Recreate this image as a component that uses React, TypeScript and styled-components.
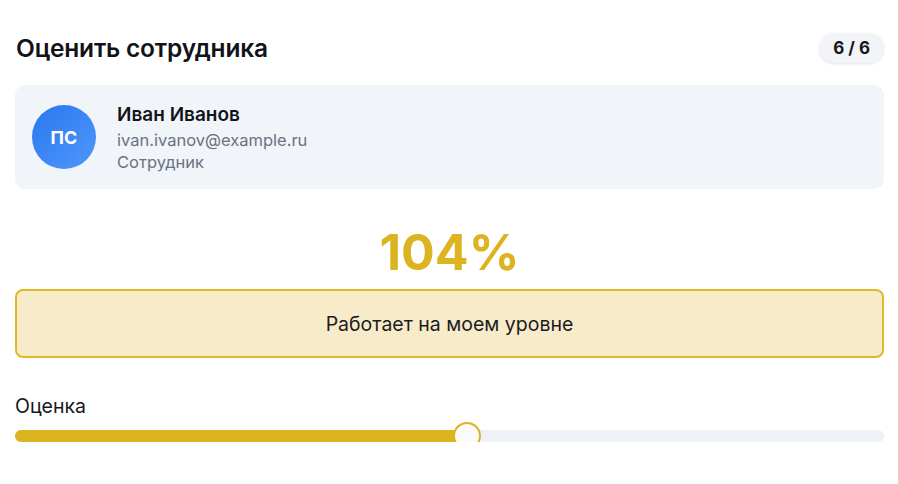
import styled, { createGlobalStyle } from 'styled-components';

const GlobalStyle = createGlobalStyle`
  body {
    margin: 0;
    background: #ffffff;
    font-family: Inter, 'Noto Sans', sans-serif;
    color: #16181d;
  }
`;

const score = 104;
const sliderPercent = 52.1;

const App = () => {
  return (
    <>
      <GlobalStyle />
      <Page>
        <Header>
          <Title>Оценить сотрудника</Title>
          <Counter>6 / 6</Counter>
        </Header>
        <EmployeeCard>
          <Avatar>ПС</Avatar>
          <EmployeeInfo>
            <EmployeeName>Иван Иванов</EmployeeName>
            <EmployeeMeta>ivan.ivanov@example.ru</EmployeeMeta>
            <EmployeeMeta>Сотрудник</EmployeeMeta>
          </EmployeeInfo>
        </EmployeeCard>
        <Score>{score}%</Score>
        <LevelBox>Работает на моем уровне</LevelBox>
        <SliderLabel>Оценка</SliderLabel>
        <SliderTrack>
          <SliderFill style={{ width: `${sliderPercent}%` }}>
            <SliderThumb />
          </SliderFill>
        </SliderTrack>
      </Page>
    </>
  );
};

const Page = styled.div`
  display: flex;
  flex-direction: column;
  padding: 33px 14px 0 15px;
`;

const Header = styled.div`
  display: flex;
  align-items: center;
  justify-content: space-between;
  height: 30px;
`;

const Title = styled.h1`
  margin: 0 0 0 1px;
  font-size: 24.5px;
  font-weight: 600;
  letter-spacing: -0.2px;
  color: #111318;
`;

const Counter = styled.span`
  padding: 5px 14px;
  border-radius: 15px;
  background-color: #f2f4f8;
  box-shadow: 0 1px 3px rgba(20, 30, 60, 0.12);
  font-size: 17px;
  font-weight: 700;
  color: #15171c;
`;

const EmployeeCard = styled.div`
  display: flex;
  align-items: center;
  gap: 21px;
  height: 104px;
  margin-top: 22px;
  padding: 0 17px;
  border-radius: 10px;
  background-color: #f1f4f9;
`;

const Avatar = styled.div`
  display: flex;
  align-items: center;
  justify-content: center;
  flex-shrink: 0;
  width: 64px;
  height: 64px;
  border-radius: 50%;
  background: linear-gradient(135deg, #2a78f0 0%, #4f97fa 100%);
  color: #ffffff;
  font-size: 18px;
  font-weight: 700;
`;

const EmployeeInfo = styled.div`
  display: flex;
  flex-direction: column;
  margin-top: 2px;
`;

const EmployeeName = styled.span`
  font-size: 19px;
  font-weight: 600;
  line-height: 24px;
  color: #121419;
  margin-bottom: 2px;
`;

const EmployeeMeta = styled.span`
  font-size: 16.5px;
  line-height: 22px;
  color: #6b7280;
`;

const Score = styled.div`
  margin-top: 33px;
  text-align: center;
  font-size: 50px;
  font-weight: 700;
  line-height: 60px;
  color: #dcb420;
`;

const LevelBox = styled.div`
  display: flex;
  align-items: center;
  justify-content: center;
  height: 65px;
  margin-top: 7px;
  border: 2px solid #dfb928;
  border-radius: 8px;
  background-color: #f8ebc9;
  font-size: 19.5px;
  color: #1b1c1f;
`;

const SliderLabel = styled.div`
  margin-top: 36px;
  font-size: 19.5px;
  line-height: 24px;
  color: #16181d;
`;

const SliderTrack = styled.div`
  margin-top: 12px;
  height: 12px;
  border-radius: 6px;
  background-color: #eef1f7;
`;

const SliderFill = styled.div`
  position: relative;
  height: 100%;
  border-radius: 6px;
  background-color: #dcb420;
`;

const SliderThumb = styled.span`
  position: absolute;
  right: -13px;
  top: 50%;
  width: 24px;
  height: 24px;
  transform: translateY(-50%);
  border-radius: 50%;
  border: 2px solid #dcb420;
  background-color: #fafafa;
`;

export default App;
